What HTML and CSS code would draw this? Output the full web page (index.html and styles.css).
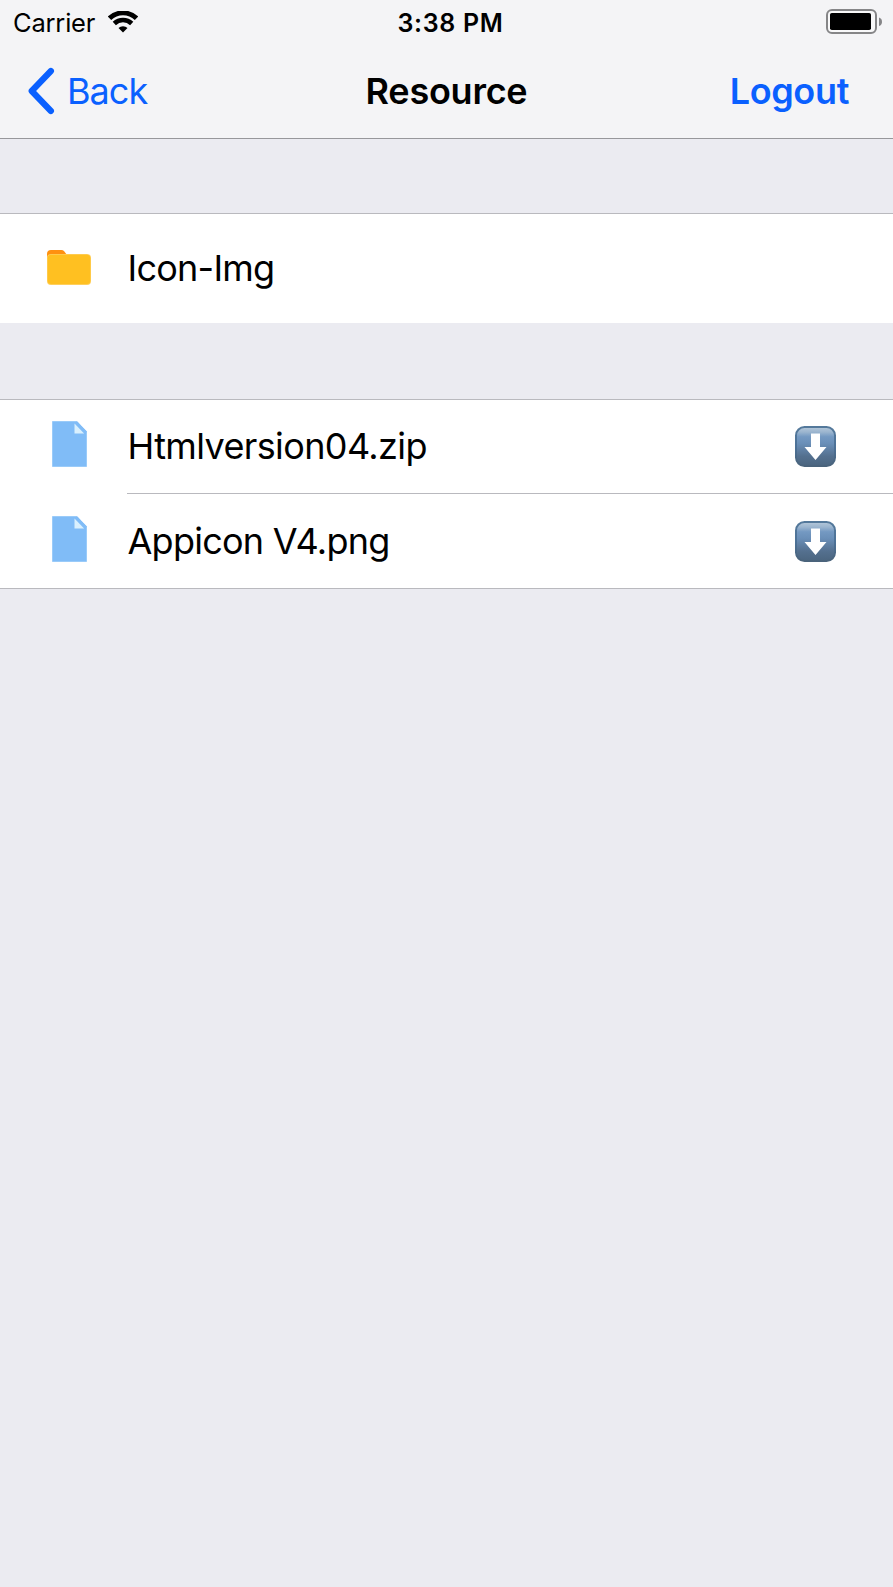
FILE: index.html
```html
<!DOCTYPE html>
<html lang="en">
<head>
<meta charset="utf-8">
<title>Resource</title>
<link rel="stylesheet" href="styles.css">
</head>
<body>
<header class="header">
  <div class="status">
    <div class="carrier"><span class="carrier-name">Carrier</span>
      <svg class="wifi" width="30" height="22" viewBox="0 0 30 22"><path d="M1.500 7.300a19.500 19.500 0 0 1 27 0" fill="none" stroke="#000" stroke-width="4.900"/><path d="M6.300 12.500a12.500 12.500 0 0 1 17.400 0" fill="none" stroke="#000" stroke-width="4.600"/><path d="M15 21.500l-4.500-4.500a6.500 6.500 0 0 1 9 0z"/></svg>
    </div>
    <div class="time">3:38 PM</div>
    <svg class="battery" width="57" height="25" viewBox="0 0 57 25"><rect x="1" y="1" width="49" height="23" rx="5" fill="#f8f8f9" stroke="#858587" stroke-width="2"/><rect x="4" y="4" width="41" height="17" rx="1.800"/><path d="M53 8.500q3 1 3 4.300t-3 4.300z" fill="#858587"/></svg>
  </div>
  <nav class="nav">
    <div class="back"><svg class="chevron" width="28" height="48" viewBox="0 0 28 48"><path d="M23.900 4L4.700 24l19.200 20" fill="none" stroke="#0a60ff" stroke-width="6.200" stroke-linecap="round" stroke-linejoin="round"/></svg><span class="back-label">Back</span></div>
    <h1 class="title">Resource</h1>
    <div class="logout"><span class="logout-label">Logout</span></div>
  </nav>
</header>
<svg class="defs" width="0" height="0">
  <defs>
    <linearGradient id="tile" x1="0" y1="0" x2="0" y2="1"><stop offset="0" stop-color="#b5c8da"/><stop offset=".13" stop-color="#9bb5cf"/><stop offset=".25" stop-color="#7499c2"/><stop offset=".42" stop-color="#6a8fb8"/><stop offset=".75" stop-color="#54708f"/><stop offset="1" stop-color="#4b657f"/></linearGradient>
    <linearGradient id="rim" x1="0" y1="0" x2="0" y2="1"><stop offset="0" stop-color="#54799b"/><stop offset=".5" stop-color="#4c7197"/><stop offset="1" stop-color="#4a637b"/></linearGradient>
    <symbol id="file" viewBox="0 0 35 46"><path d="M.5.5h24.300L34.500 11v34.500H.5z" fill="#80bcf7" stroke="#9acbf9" stroke-width="1"/><path d="M24.500.8L34.500 11" stroke="#80bcf7" stroke-width="1.500"/><path d="M22.500 2.500v10h9.600z" fill="#d9f0fe"/></symbol>
    <symbol id="download" viewBox="0 0 41 41"><rect x="1" y="1" width="39" height="39" rx="8.500" fill="url(#tile)" stroke="url(#rim)" stroke-width="2"/><path d="M16 7.500h9V21h6.500L20.500 34 9.500 21H16z" fill="#fff"/></symbol>
  </defs>
</svg>
<main>
  <section class="group folders">
    <div class="row">
      <div class="icon"><svg width="44" height="35" viewBox="0 0 44 35"><path d="M0 12V4Q0 0 4 0h10.500q1.500 0 2.700 1.300L20 5v7z" fill="#ff9110"/><rect y="4" width="44" height="31" rx="4" fill="#ffcf5c"/><rect x=".7" y="4.700" width="42.600" height="29.300" rx="3.500" fill="#ffc021"/></svg></div>
      <div class="label"><span class="name n1">Icon-Img</span></div>
    </div>
  </section>
  <section class="group files">
    <div class="row">
      <div class="icon"><svg width="35" height="46"><use href="#file"/></svg></div>
      <div class="label"><span class="name n2">Htmlversion04.zip</span><svg class="download" width="41" height="41"><use href="#download"/></svg></div>
    </div>
    <div class="row">
      <div class="icon"><svg width="35" height="46"><use href="#file"/></svg></div>
      <div class="label"><span class="name n3">Appicon V4.png</span><svg class="download" width="41" height="41"><use href="#download"/></svg></div>
    </div>
  </section>
</main>
</body>
</html>
```
FILE: styles.css
```css
* { box-sizing: border-box; }
body { margin: 0; min-height: 1587px; background: #ebebf1; color: #000; font-family: Inter, "Liberation Sans", sans-serif; }
svg { display: block; flex: none; }
.defs { position: absolute; }
.header { height: 139px; background: #f4f4f6; border-bottom: 1px solid #97979b; }
.status { height: 46px; display: grid; grid-template-columns: 1fr auto 1fr; align-items: start; font-size: 25.500px; line-height: 46px; white-space: nowrap; }
.carrier { display: flex; padding-left: 13px; }
.carrier-name { width: 95px; letter-spacing: -0.200px; }
.wifi { margin-top: 10.500px; }
.time { font-weight: 600; font-size: 25px; letter-spacing: 0.700px; padding-left: 8px; }
.battery { justify-self: end; margin: 9px 10px 0 0; }
.nav { height: 92px; display: grid; grid-template-columns: 1fr auto 1fr; font-size: 36px; line-height: 91px; white-space: nowrap; }
.back { display: flex; padding-left: 27px; color: #0a60ff; }
.chevron { margin-top: 21px; }
.back-label { margin-left: 12px; letter-spacing: -0.950px; }
.title { margin: 0; font: inherit; font-weight: 600; letter-spacing: -0.250px; }
.logout { justify-self: end; padding-right: 44px; color: #0a60ff; font-weight: 600; letter-spacing: -0.350px; }
.group { background: #fff; border-top: 1px solid #b9b9be; }
.folders { margin-top: 74px; height: 110px; }
.files { margin-top: 76px; border-bottom: 1px solid #b9b9be; }
.row { height: 94px; display: flex; }
.row + .row { padding-top: 1px; }
.folders .row { height: 109px; }
.icon { width: 127px; display: flex; align-items: flex-start; padding-left: 51.500px; padding-top: 21px; flex: none; }
.folders .icon { padding-left: 47px; padding-top: 36px; }
.label { flex: 1; display: flex; justify-content: space-between; font-size: 36px; line-height: 92px; white-space: nowrap; }
.folders .label { line-height: 108px; }
.name { padding-left: 0.500px; }
.n1 { letter-spacing: -0.750px; }
.n2 { letter-spacing: -0.620px; }
.n3 { letter-spacing: -0.750px; }
.files .row:first-child .label { border-bottom: 1px solid #b9b9be; }
.download { margin: 26px 57px 0 0; }
```
